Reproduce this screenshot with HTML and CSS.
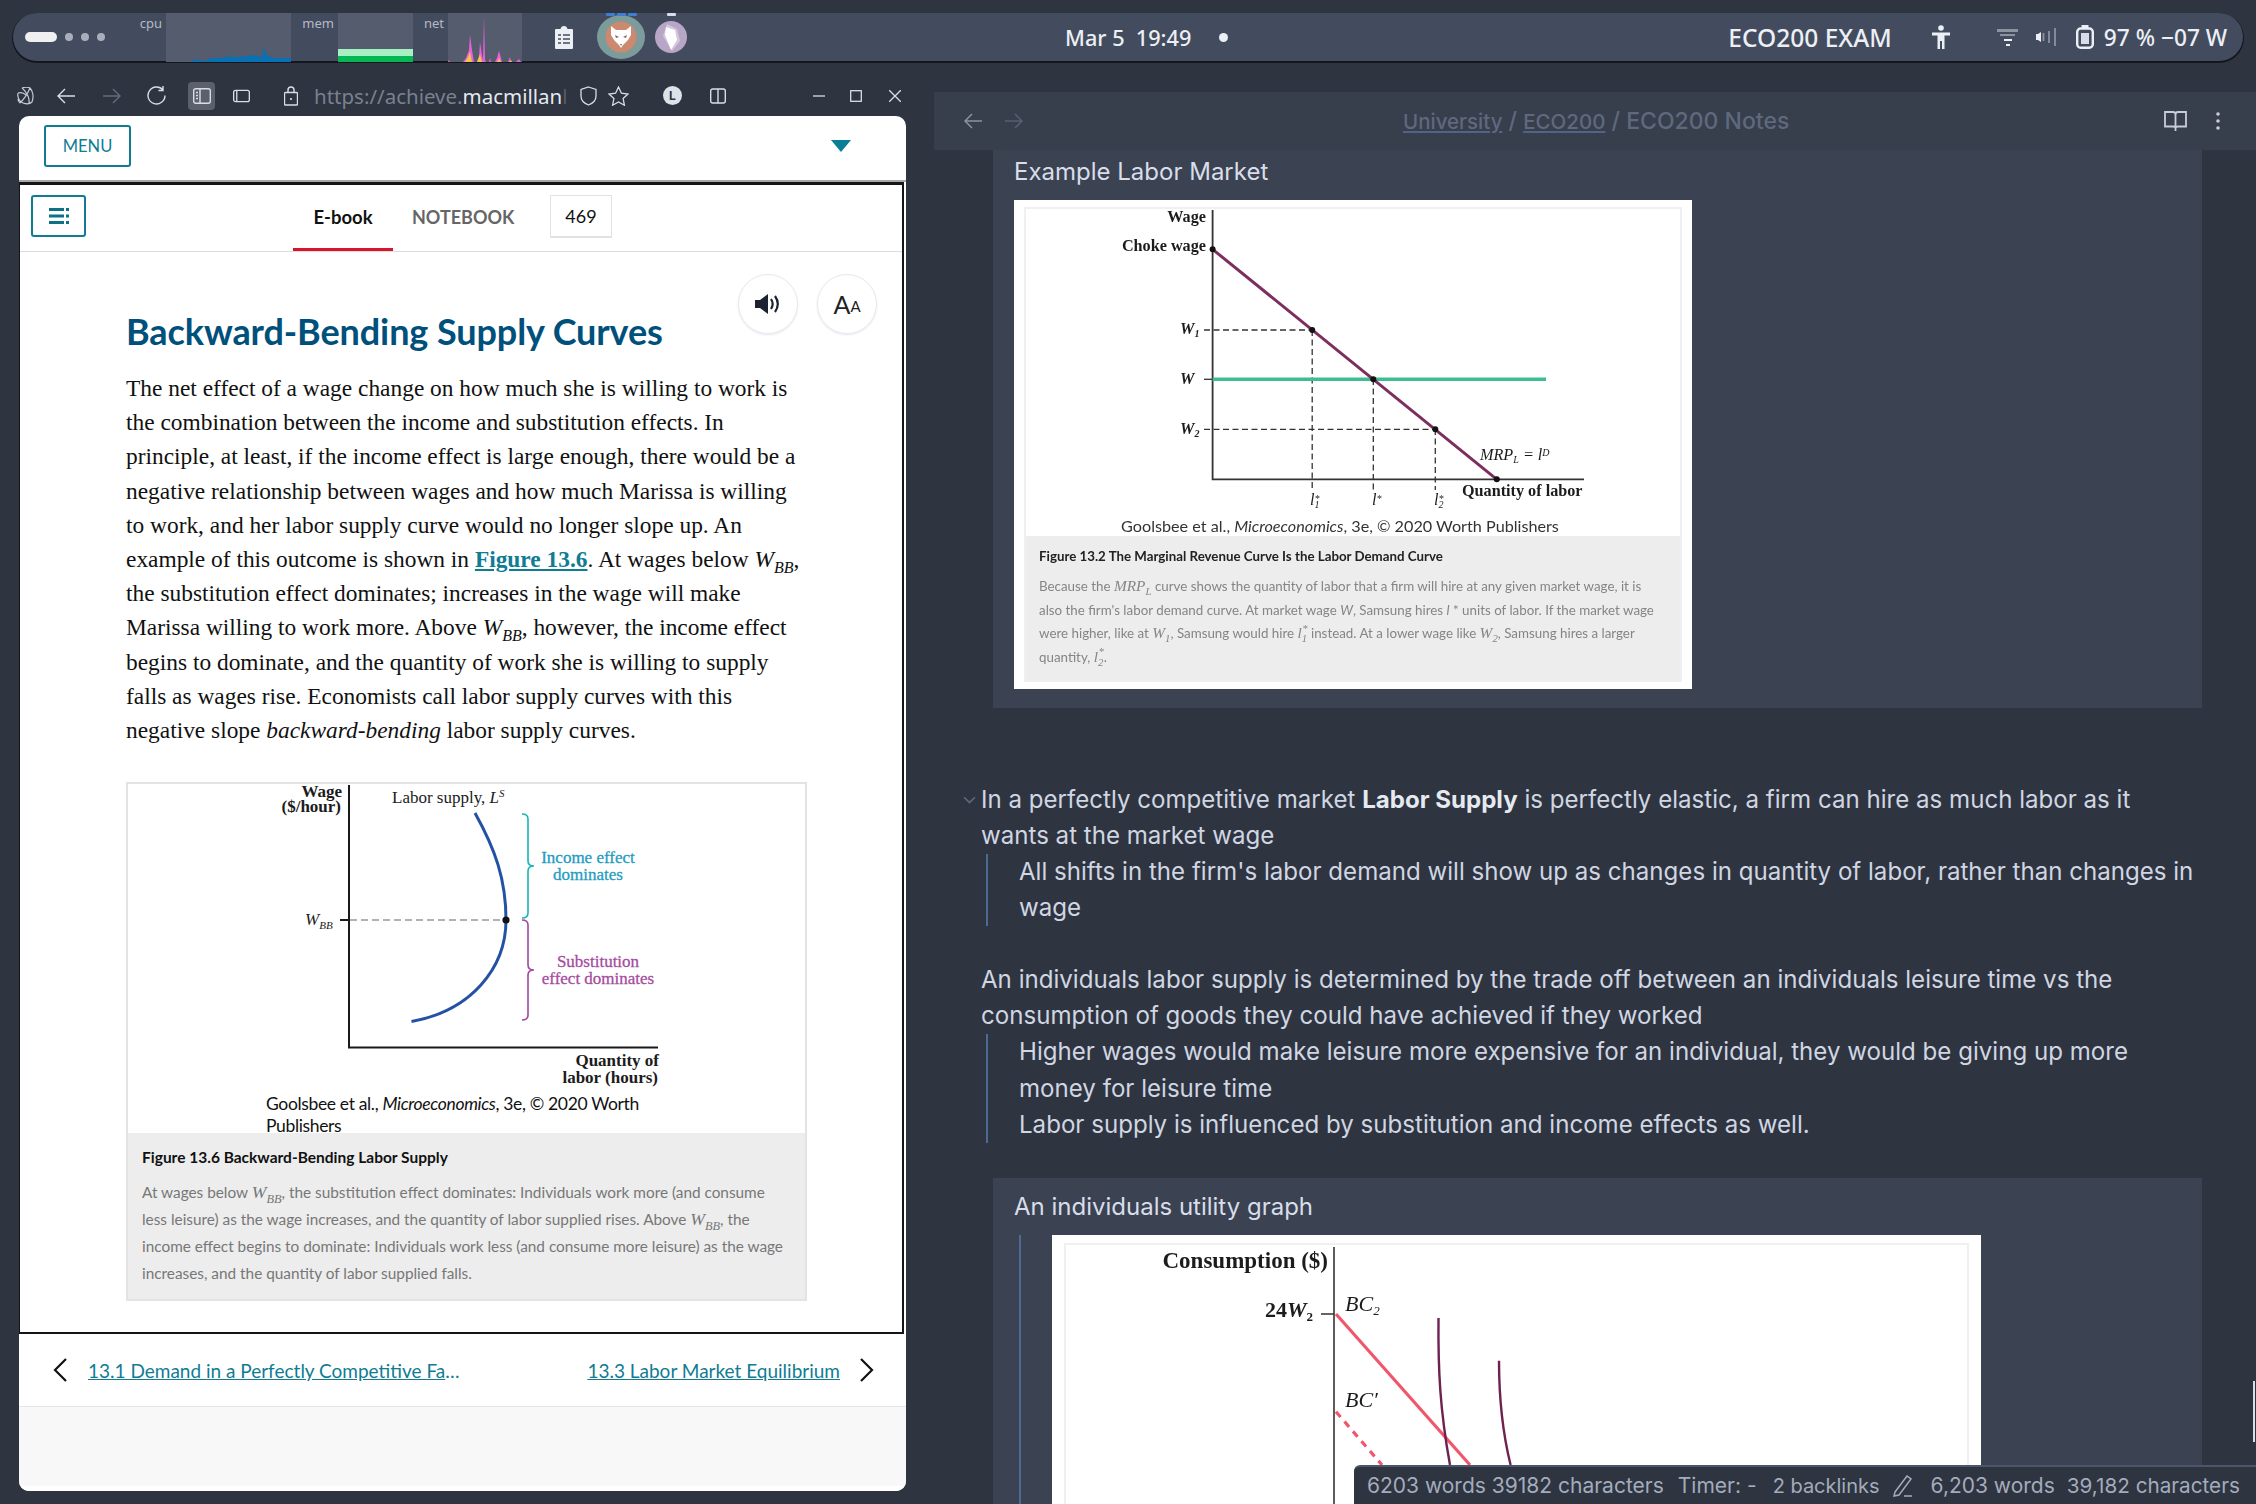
FILE: index.html
```html
<!DOCTYPE html>
<html lang="en">
<head>
	<meta charset="UTF-8">
	<title>ECO200 Notes</title>
	<link rel="stylesheet" href="styles.css">
</head>
<body>
<div class="desktop">

	<!-- top panel -->
	<div class="panel">
		<span class="pill"></span>
		<span class="dot"></span><span class="dot"></span><span class="dot"></span>
		<span class="graph-label label-cpu">cpu</span>
		<svg class="graph graph-cpu" viewBox="166 13 125 49" preserveAspectRatio="none">
			<polygon fill="#0a70b4" points="166,62 190,62 194,60 199,59 201,61 209,60 210,58 222,58 226,57 232,56 236,58 240,56 246,57 250,55 258,56 262,57 264,47 266,54 270,57 276,58 291,58 291,62"/>
		</svg>
		<span class="graph-label label-mem">mem</span>
		<div class="graph graph-mem"><span class="mem-cache"></span><span class="mem-used"></span></div>
		<span class="graph-label label-net">net</span>
		<svg class="graph graph-net" viewBox="448 13 74 49" preserveAspectRatio="none">
			<polygon fill="#e961d8" points="448,62 449,60 450,62 463,62 466,58 469,50 470,35 472,50 474,62 477,62 479,58 480,42 482,55 483,60 484,16 485,60 486,62 489,62 490,58 491,62 495,62 497,58 499,51 501,58 502,62 508,62 510,57 511,62 516,62 518,60 519,59 521,62"/>
			<polygon fill="#f3c64a" points="465,62 468,57 470,52 472,62 477,62 480,54 482,62 497,62 499,58 501,62 509,62 511,60 512,62"/>
		</svg>
		<svg class="panel-clip" viewBox="0 0 18 24">
			<path fill="#eceff4" d="M1 4h4.500c.5-2 1.500-3 3.500-3s3 1 3.500 3H17a1 1 0 0 1 1 1v18a1 1 0 0 1-1 1H1a1 1 0 0 1-1-1V5a1 1 0 0 1 1-1z"/>
			<path stroke="#434c5e" stroke-width="1.600" d="M3 10h3M8 10h7M3 14h3M8 14h7M3 18h3M8 18h7"/>
		</svg>
		<div class="app app-fox">
			<span class="app-marks"><i></i><i></i><i></i></span>
			<svg viewBox="0 0 48 44" width="48" height="44">
				<ellipse cx="24" cy="22" rx="24" ry="22" fill="#7b9c9b"/>
				<circle cx="24" cy="22" r="15.500" fill="#cd8870"/>
				<polygon fill="#fff" points="14,11 19,15 29,15 34,11 34,20 31,25 26,30 24,33 22,30 17,25 14,20"/>
				<path fill="#7a6a64" d="M18 20l4 2-3 1zM30 20l-4 2 3 1zM23 29h2l-1 2z"/>
			</svg>
		</div>
		<div class="app app-gem">
			<span class="app-marks"><i></i></span>
			<svg viewBox="0 0 32 32" width="32" height="32">
				<circle cx="16" cy="16" r="16" fill="#b8a6c6"/>
				<polygon fill="#d2c7dc" points="12,3 22,8 25,20 17,30 8,15"/>
				<polygon fill="#fff" points="11,6 20,9 22,19 16,29 10,14"/>
			</svg>
		</div>
		<span class="clock">Mar 5&nbsp; 19:49</span>
		<span class="clock-dot"></span>
		<span class="task">ECO200 EXAM</span>
		<svg class="icon-person" viewBox="0 0 18 24">
			<circle cx="9" cy="3" r="2.800" fill="#eceff4"/>
			<path fill="#eceff4" d="M0 7.500h18v3h-5.500V24H10v-8H8v8H5.500V10.500H0z"/>
		</svg>
		<svg class="icon-signal" viewBox="0 0 22 17">
			<path fill="#8b92a0" d="M0 0h21v3H0zM3 5h15v2H3z"/><path fill="#eceff4" d="M7 10h8v2H7zM9 15h4v2H9z"/>
		</svg>
		<svg class="icon-volume" viewBox="0 0 20 18">
			<path fill="#eceff4" d="M0 6h2l3-2v10l-3-2H0z"/><path stroke="#8b92a0" stroke-width="1.800" fill="none" d="M7.500 5v8M13 3v12M19 0v18"/>
		</svg>
		<svg class="icon-battery" viewBox="0 0 18 24">
			<rect x="5.500" y="0" width="7" height="4" fill="#eceff4"/>
			<rect x="1.200" y="3.500" width="15.600" height="19.300" rx="3.500" fill="none" stroke="#eceff4" stroke-width="2.400"/>
			<rect x="5" y="8" width="8" height="11" fill="#d8dee9"/>
		</svg>
		<span class="battery-text">97 % −07 W</span>
	</div>

	<div class="workspace">

		<!-- browser window -->
		<div class="browser">
			<div class="toolbar">
				<svg class="tb tb-leaf" viewBox="0 0 18 18"><path fill="none" stroke="#c8ccd4" stroke-width="1.200" d="M1 6c3-1 6 0 8 2M5 1c4 3 8 10 7 15M13 1C11 6 7 12 3 16M1 6c-1 5 2 9 5 10s7 1 9-1M13 1c3 3 4 9 2 14M5 1c3-1 6-1 8 0M3 16c-1-1-2-2-2-4"/></svg>
				<svg class="tb tb-back" viewBox="0 0 18 18"><path fill="none" stroke="#d8dee9" stroke-width="1.400" d="M18 9H1M8 2L1 9l7 7"/></svg>
				<svg class="tb tb-forward" viewBox="0 0 18 18"><path fill="none" stroke="#646c7c" stroke-width="1.400" d="M0 9h17M10 2l7 7-7 7"/></svg>
				<svg class="tb tb-reload" viewBox="0 0 19 20"><path fill="none" stroke="#d8dee9" stroke-width="1.400" d="M16 4a8.500 8.500 0 1 0 2 5.500M16 0v4.500h-4.500"/></svg>
				<span class="tb-active"><svg viewBox="0 0 18 18" width="18" height="18"><rect x=".7" y="1.700" width="16.600" height="14.600" rx="2" fill="none" stroke="#d8dee9" stroke-width="1.400"/><path stroke="#d8dee9" stroke-width="1.400" d="M7 2v14M3 5.500h2M3 8.500h2M3 11.500h2"/></svg></span>
				<svg class="tb tb-panel" viewBox="0 0 18 16"><rect x=".7" y="2" width="16.600" height="12" rx="2" fill="none" stroke="#d8dee9" stroke-width="1.400"/><path stroke="#d8dee9" stroke-width="1.400" d="M4 2v12"/></svg>
				<svg class="tb tb-lock" viewBox="0 0 14 20"><path fill="none" stroke="#d8dee9" stroke-width="1.400" d="M4 6.500V4a3 3 0 0 1 6 0v2.500M1.500 6.500h11a1 1 0 0 1 1 1V18a1 1 0 0 1-1 1h-11a1 1 0 0 1-1-1V7.500a1 1 0 0 1 1-1z"/><circle cx="7" cy="13" r="1.100" fill="#d8dee9"/></svg>
				<div class="url"><span class="url-dim">https://achieve.</span>macmillan<span class="url-fade">l</span></div>
				<svg class="tb tb-shield" viewBox="0 0 17 20"><path fill="none" stroke="#d8dee9" stroke-width="1.300" d="M8.500 1l7.500 2.500V10c0 4.500-3.500 7.500-7.500 9-4-1.500-7.500-4.500-7.500-9V3.500z"/></svg>
				<svg class="tb tb-star" viewBox="0 0 21 20"><path fill="none" stroke="#d8dee9" stroke-width="1.300" d="M10.500 1l2.900 6.200 6.600.8-4.900 4.600 1.300 6.600-5.900-3.300-5.900 3.300 1.300-6.600L1 8l6.600-.8z"/></svg>
				<span class="tb-user">L</span>
				<svg class="tb tb-split" viewBox="0 0 16 16"><rect x=".7" y="1" width="14.600" height="14" rx="2" fill="none" stroke="#d8dee9" stroke-width="1.400"/><path stroke="#d8dee9" stroke-width="1.400" d="M8 1v14"/></svg>
				<svg class="tb tb-min" viewBox="0 0 12 12"><path stroke="#d8dee9" stroke-width="1.300" d="M0 6h12"/></svg>
				<svg class="tb tb-max" viewBox="0 0 12 12"><rect x=".7" y=".7" width="10.600" height="10.600" fill="none" stroke="#d8dee9" stroke-width="1.300"/></svg>
				<svg class="tb tb-close" viewBox="0 0 12 12"><path stroke="#d8dee9" stroke-width="1.300" d="M0 0l12 12M12 0L0 12"/></svg>
			</div>

			<div class="card">
				<div class="menu-bar">
					<span class="menu-btn">MENU</span>
					<span class="menu-caret"></span>
				</div>
				<div class="frame">
					<div class="tabs">
						<span class="toc-btn">
							<svg viewBox="0 0 20 16" width="20" height="16"><path fill="#0d7186" d="M0 0h15v3H0zM17 0h3v3h-3zM0 6.500h15v3H0zM17 6.500h3v3h-3zM0 13h15v3H0zM17 13h3v3h-3z"/></svg>
						</span>
						<span class="tab tab-active">E-book</span>
						<span class="tab tab-notebook">NOTEBOOK</span>
						<span class="page-box">469</span>
					</div>
					<div class="article">
						<div class="article-head">
							<h1>Backward-Bending Supply Curves</h1>
							<div class="tools">
								<span class="tool">
									<svg viewBox="0 0 26 22" width="26" height="22"><path fill="#1d2230" d="M0 7h5l8-6v20l-8-6H0z"/><path fill="none" stroke="#1d2230" stroke-width="2.200" d="M16 6c2 3 2 7 0 10M20 3c3.500 5 3.500 11 0 16"/></svg>
								</span>
								<span class="tool tool-text">A<small>A</small></span>
							</div>
						</div>
						<p class="body-text">The net effect of a wage change on how much she is willing to work is<br>
						the combination between the income and substitution effects. In<br>
						principle, at least, if the income effect is large enough, there would be a<br>
						negative relationship between wages and how much Marissa is willing<br>
						to work, and her labor supply curve would no longer slope up. An<br>
						example of this outcome is shown in <a href="#">Figure 13.6</a>. At wages below <i>W<sub>BB</sub></i>,<br>
						the substitution effect dominates; increases in the wage will make<br>
						Marissa willing to work more. Above <i>W<sub>BB</sub></i>, however, the income effect<br>
						begins to dominate, and the quantity of work she is willing to supply<br>
						falls as wages rise. Economists call labor supply curves with this<br>
						negative slope <i>backward-bending</i> labor supply curves.</p>

						<div class="figure">
							<svg class="figure-art" viewBox="266 785 400 309" width="400" height="309">
								<path stroke="#1a1a1a" stroke-width="2" fill="none" d="M349 786V1048.500H658M340 921h9"/>
								<path stroke="#999" stroke-width="1.300" stroke-dasharray="7 4" d="M350 921h156"/>
								<path stroke="#2352a5" stroke-width="3" fill="none" d="M475 814C495 850 506 880 506 921C506 970 470 1012 411.500 1022.500"/>
								<circle cx="506" cy="921" r="3.600" fill="#111"/>
								<path stroke="#18b5b5" stroke-width="1.600" fill="none" d="M522 815c4 0 6 1 6 5v42c0 3 2 5 6 5c-4 0-6 2-6 5v42c0 4-2 5-6 5"/>
								<path stroke="#a0479c" stroke-width="1.600" fill="none" d="M522 921c4 0 6 1 6 5v40c0 3 2 5 6 5c-4 0-6 2-6 5v40c0 4-2 5-6 5"/>
								<g class="art-text art-bold">
									<text x="342" y="798" text-anchor="end">Wage</text>
									<text x="341" y="813" text-anchor="end">($/hour)</text>
									<text x="659" y="1067" text-anchor="end">Quantity of</text>
									<text x="658" y="1084" text-anchor="end">labor (hours)</text>
								</g>
								<g class="art-text">
									<text x="392" y="804">Labor supply, <tspan font-style="italic">L</tspan><tspan font-style="italic" font-size="11" dy="-6">S</tspan></text>
									<text x="305" y="926" font-style="italic">W<tspan font-size="11" dy="4">BB</tspan></text>
								</g>
								<g class="art-text art-teal">
									<text x="588" y="864" text-anchor="middle">Income effect</text>
									<text x="588" y="881" text-anchor="middle">dominates</text>
								</g>
								<g class="art-text art-purple">
									<text x="598" y="968" text-anchor="middle">Substitution</text>
									<text x="598" y="985" text-anchor="middle">effect dominates</text>
								</g>
							</svg>
							<p class="figure-credit">Goolsbee et al., <i>Microeconomics</i>, 3e, © 2020 Worth<br>Publishers</p>
							<div class="caption">
								<h4>Figure 13.6 Backward-Bending Labor Supply</h4>
								<p>At wages below <i class="math">W<sub>BB</sub></i>, the substitution effect dominates: Individuals work more (and consume<br>
								less leisure) as the wage increases, and the quantity of labor supplied rises. Above <i class="math">W<sub>BB</sub></i>, the<br>
								income effect begins to dominate: Individuals work less (and consume more leisure) as the wage<br>
								increases, and the quantity of labor supplied falls.</p>
							</div>
						</div>
					</div>
				</div>
				<div class="page-nav">
					<svg class="chev" viewBox="0 0 14 24"><path fill="none" stroke="#111" stroke-width="2.200" d="M13 1L2 12l11 11"/></svg>
					<a class="nav-link nav-prev" href="#">13.1 Demand in a Perfectly Competitive Factor Market</a>
					<a class="nav-link nav-next" href="#">13.3 Labor Market Equilibrium</a>
					<svg class="chev" viewBox="0 0 14 24"><path fill="none" stroke="#111" stroke-width="2.200" d="M1 1l11 11L1 23"/></svg>
				</div>
				<div class="card-bottom"></div>
			</div>
		</div>

		<!-- notes window -->
		<div class="notes">
			<div class="notes-head">
				<svg class="nh-back" viewBox="0 0 18 16"><path fill="none" stroke="#8a93a6" stroke-width="1.500" d="M18 8H1M8 1L1 8l7 7"/></svg>
				<svg class="nh-forward" viewBox="0 0 18 16"><path fill="none" stroke="#576074" stroke-width="1.500" d="M0 8h17M10 1l7 7-7 7"/></svg>
				<div class="crumbs"><a href="#">University</a> / <a href="#">ECO200</a> / ECO200 Notes</div>
				<svg class="nh-book" viewBox="0 0 23 20"><path fill="none" stroke="#c8ced9" stroke-width="1.800" d="M1 1h8c1.500 0 2.500 1 2.500 2.500V17c0-1-1-1.500-2.500-1.500H1zM22 1h-8c-1.500 0-2.500 1-2.500 2.500V17c0-1 1-1.500 2.500-1.500h8zM11.500 17v3"/></svg>
				<svg class="nh-more" viewBox="0 0 4 18"><circle cx="2" cy="2" r="1.800" fill="#c8ced9"/><circle cx="2" cy="9" r="1.800" fill="#c8ced9"/><circle cx="2" cy="16" r="1.800" fill="#c8ced9"/></svg>
			</div>

			<div class="callout callout-first">
				<div class="callout-title">Example Labor Market</div>
				<div class="shot shot-market">
					<div class="shot-inner">
						<svg viewBox="1026 209 652 310" width="652" height="310">
							<path stroke="#333" stroke-width="1.800" fill="none" d="M1212.600 210V479.300H1584"/>
							<path stroke="#333" stroke-width="1.300" stroke-dasharray="6 3.500" fill="none" d="M1204 330H1312M1204 429.300H1435M1312.200 330V490M1373.300 379V490M1435.300 429V490"/>
							<path stroke="#333" stroke-width="1.300" d="M1204 379.300h9"/>
							<path stroke="#3dbd90" stroke-width="3.500" d="M1212.600 379.300H1546"/>
							<path stroke="#7c2f5e" stroke-width="3" d="M1212.600 249.300L1496.800 479.300"/>
							<g fill="#111">
								<circle cx="1212.600" cy="249.300" r="3"/><circle cx="1312.200" cy="330" r="3"/><circle cx="1373.300" cy="379.300" r="3"/><circle cx="1435.300" cy="429.300" r="3"/><circle cx="1496.800" cy="479.300" r="3"/>
							</g>
							<g class="art-text art-bold art-small">
								<text x="1206" y="222" text-anchor="end">Wage</text>
								<text x="1206" y="251" text-anchor="end">Choke wage</text>
								<text x="1462" y="496">Quantity of labor</text>
							</g>
							<g class="art-text art-small" font-style="italic" font-weight="bold">
								<text x="1180" y="334">W<tspan font-size="10" dy="3">1</tspan></text>
								<text x="1180" y="384">W</text>
								<text x="1180" y="434">W<tspan font-size="10" dy="3">2</tspan></text>
								<text x="1480" y="460" font-weight="normal">MRP<tspan font-size="10" dy="3">L</tspan><tspan dy="-3"> = l</tspan><tspan font-size="10" dy="-4">D</tspan></text>
								<text x="1310" y="505" font-weight="normal">l<tspan font-size="10" dy="3">1</tspan><tspan font-size="10" dy="-6" dx="-5">*</tspan></text>
								<text x="1372" y="505" font-weight="normal">l<tspan font-size="10" dy="-3">*</tspan></text>
								<text x="1434" y="505" font-weight="normal">l<tspan font-size="10" dy="3">2</tspan><tspan font-size="10" dy="-6" dx="-5">*</tspan></text>
							</g>
						</svg>
						<p class="shot-credit">Goolsbee et al., <i>Microeconomics</i>, 3e, © 2020 Worth Publishers</p>
						<div class="shot-caption">
							<h4>Figure 13.2 The Marginal Revenue Curve Is the Labor Demand Curve</h4>
							<p>Because the <i class="math">MRP<sub>L</sub></i> curve shows the quantity of labor that a firm will hire at any given market wage, it is<br>
							also the firm's labor demand curve. At market wage <i>W</i>, Samsung hires <i>l</i> * units of labor. If the market wage<br>
							were higher, like at <i class="math">W<sub>1</sub></i>, Samsung would hire <i class="math">l<sub>1</sub><sup>*</sup></i> instead. At a lower wage like <i class="math">W<sub>2</sub></i>, Samsung hires a larger<br>
							quantity, <i class="math">l<sub>2</sub><sup>*</sup></i>.</p>
						</div>
					</div>
				</div>
			</div>

			<div class="note-block note-block-first">
				<svg class="fold" viewBox="0 0 12 8"><path fill="none" stroke="#5f6a80" stroke-width="1.500" d="M1 1l5 5 5-5"/></svg>
				<p>In a perfectly competitive market <b>Labor Supply</b> is perfectly elastic, a firm can hire as much labor as it wants at the market wage</p>
				<div class="note-quote">All shifts in the firm's labor demand will show up as changes in quantity of labor, rather than changes in wage</div>
			</div>
			<div class="note-block note-block-next">
				<p>An individuals labor supply is determined by the trade off between an individuals leisure time vs the consumption of goods they could have achieved if they worked</p>
				<div class="note-quote">Higher wages would make leisure more expensive for an individual, they would be giving up more money for leisure time<br>Labor supply is influenced by substitution and income effects as well.</div>
			</div>

			<div class="callout callout-second">
				<div class="callout-title">An individuals utility graph</div>
				<div class="quote-rail">
					<div class="shot shot-utility">
						<div class="shot-inner shot-inner-open">
							<svg viewBox="1065 1245 904 260" width="904" height="260">
								<path stroke="#333" stroke-width="1.600" d="M1333 1247V1505M1320 1314h13"/>
								<path stroke="#f0566c" stroke-width="3.200" d="M1335 1314L1469 1465"/>
								<path stroke="#f0566c" stroke-width="3.200" stroke-dasharray="7 6" d="M1335 1411.700L1381 1465"/>
								<path stroke="#6d2250" stroke-width="2.400" fill="none" d="M1437.500 1318C1437 1370 1439 1410 1449 1465"/>
								<path stroke="#6d2250" stroke-width="2.400" fill="none" d="M1498 1360.700C1498 1400 1501 1430 1509.600 1465"/>
								<g class="art-text art-bold art-utility">
									<text class="art-consumption" x="1327" y="1268" text-anchor="end">Consumption ($)</text>
									<text x="1264" y="1317">24<tspan font-style="italic">W</tspan><tspan font-size="13" dy="4">2</tspan></text>
								</g>
								<g class="art-text art-utility" font-style="italic">
									<text x="1344" y="1311">BC<tspan font-size="13" dy="4">2</tspan></text>
									<text x="1344" y="1407">BC′</text>
								</g>
							</svg>
						</div>
					</div>
				</div>
			</div>
		</div>
	</div>

	<div class="scroll-mark"></div>
	<div class="status">
		<span class="st-count">6203 words 39182 characters</span>
		<span class="st-timer">Timer: -</span>
		<span class="st-links">2 backlinks</span>
		<svg class="st-pencil" viewBox="0 0 20 22"><path fill="none" stroke="#a3acbd" stroke-width="1.500" d="M2 17L14 1l4 3L6 20l-5 1zM11 21h8"/></svg>
		<span class="st-words">6,203 words</span>
		<span class="st-chars">39,182 characters</span>
	</div>
</div>
</body>
</html>
```

FILE: styles.css
```css
*{box-sizing: border-box;}
body,p,h1,h4{margin:0;padding:0}
svg{display: block;flex: none;}

body{
	background-color: #2e3440;
}
.desktop{
	width: 2256px;
	height: 1504px;
	position: relative;
	overflow: hidden;
	background-color: #2e3440;
	color: #d8dee9;
	font-family: "Inter", "Noto Sans", sans-serif;
}

/* top panel */
.panel{
	height: 48px;
	margin: 13px 13px 14px 13px;
	display: flex;
	align-items: center;
	background-color: #434c5e;
	border-radius: 24px;
	box-shadow: 0 1px 0 1px #14171d;
	color: #eceff4;
	font-family: "Noto Sans", sans-serif;
}
.pill{
	width: 32px;
	height: 10px;
	margin-left: 12px;
	border-radius: 5px;
	background-color: #f0f0f0;
}
.dot{
	width: 8px;
	height: 8px;
	margin-left: 8px;
	border-radius: 50%;
	background-color: #a9afba;
}
.graph-label{
	align-self: flex-start;
	margin-top: 1px;
	font-size: 13px;
	line-height: 18px;
	text-align: right;
	color: #b4bac6;
}
.label-cpu{width: 52px;margin-left: 5px;}
.label-mem{width: 43px;}
.label-net{width: 31px;}
.graph{
	align-self: stretch;
	height: 49px;
	margin-left: 4px;
	background-color: #555c6e;
}
.graph-cpu{width: 125px;}
.graph-mem{
	width: 75px;
	display: flex;
	flex-direction: column;
	justify-content: flex-end;
}
.mem-cache{height: 7px;background-color: #a8efc4;}
.mem-used{height: 6px;background-color: #06b654;}
.graph-net{width: 74px;}
.panel-clip{
	width: 18px;
	height: 24px;
	margin-left: 33px;
}
.app{
	position: relative;
	height: 48px;
	display: flex;
	align-items: center;
}
.app-fox{margin-left: 24px;}
.app-gem{margin-left: 10px;}
.app-marks{
	position: absolute;
	top: 0;
	left: 0;
	right: 0;
	display: flex;
	justify-content: center;
	gap: 2px;
}
.app-marks i{
	width: 9px;
	height: 3px;
	border-radius: 1px;
	background-color: #3b7fd6;
}
.app-gem .app-marks i{background-color: #d8dee9;}
.clock{
	margin-left: 378px;
	font-size: 21.700px;
	font-weight: 500;
	white-space: nowrap;
}
.clock-dot{
	width: 9px;
	height: 9px;
	margin-left: 28px;
	border-radius: 50%;
	background-color: #eceff4;
}
.task{
	margin-left: 500px;
	font-size: 24.500px;
	font-weight: 500;
	white-space: nowrap;
}
.icon-person{width: 18px;height: 24px;margin-left: 40px;}
.icon-signal{width: 22px;height: 17px;margin-left: 47px;}
.icon-volume{width: 20px;height: 18px;margin-left: 17px;}
.icon-battery{width: 18px;height: 24px;margin-left: 20px;}
.battery-text{
	margin-left: 10px;
	font-size: 22.700px;
	font-weight: 500;
	white-space: nowrap;
}

.workspace{
	height: 1429px;
	display: grid;
	grid-template-columns: 934px 1322px;
}

/* browser */
.browser{
	min-width: 0;
}
.toolbar{
	height: 41px;
	display: flex;
	align-items: center;
	padding-left: 17px;
}
.tb{width: 18px;height: 18px;}
.tb-back{margin-left: 22px;}
.tb-forward{margin-left: 28px;}
.tb-reload{margin-left: 26px;width: 19px;height: 20px;}
.tb-active{
	width: 27px;
	height: 28px;
	margin-left: 22px;
	display: flex;
	align-items: center;
	justify-content: center;
	border-radius: 4px;
	background-color: #5b606c;
}
.tb-panel{margin-left: 18px;width: 17px;}
.tb-lock{margin-left: 34px;width: 14px;height: 20px;}
.url{
	width: 258px;
	margin-left: 16px;
	white-space: nowrap;
	font-family: "Noto Sans", sans-serif;
	font-size: 20.500px;
	color: #e5e9f0;
}
.url-dim{color: #7a818f;}
.url-fade{color: #555c6a;}
.tb-shield{margin-left: 8px;width: 17px;height: 20px;}
.tb-star{margin-left: 11px;width: 21px;height: 20px;}
.tb-user{
	width: 19px;
	height: 19px;
	margin-left: 34px;
	border-radius: 50%;
	background-color: #dde1ea;
	color: #2e3440;
	font-size: 12px;
	font-weight: 700;
	line-height: 19px;
	text-align: center;
}
.tb-split{margin-left: 28px;width: 16px;height: 16px;}
.tb-min{margin-left: 87px;width: 12px;height: 12px;}
.tb-max{margin-left: 25px;width: 12px;height: 12px;}
.tb-close{margin-left: 27px;width: 12px;height: 12px;}

.card{
	width: 887px;
	height: 1375px;
	margin-left: 19px;
	display: flex;
	flex-direction: column;
	overflow: hidden;
	border-radius: 10px;
	background-color: #fff;
	color: #111;
	font-family: "Lato", "Noto Sans", sans-serif;
}
.menu-bar{
	height: 66px;
	flex: none;
	display: flex;
	align-items: center;
	justify-content: space-between;
	padding: 0 55px 4px 25px;
	border-bottom: 2px solid #a8a8a8;
}
.menu-btn{
	width: 87px;
	height: 42px;
	border: 2px solid #0f7c93;
	border-radius: 3px;
	color: #0f7c93;
	font-size: 16.500px;
	line-height: 38px;
	text-align: center;
}
.menu-caret{
	width: 0;
	height: 0;
	border-left: 10px solid transparent;
	border-right: 10px solid transparent;
	border-top: 12px solid #0a7d98;
}
.frame{
	height: 1152px;
	flex: none;
	margin-right: 2px;
	border: 2px solid #151515;
	border-top-width: 3px;
	border-left-width: 1px;
}
.tabs{
	height: 67px;
	display: flex;
	align-items: stretch;
	padding-left: 11px;
	border-bottom: 1px solid #dcdcdc;
}
.toc-btn{
	width: 55px;
	height: 42px;
	margin-top: 10px;
	display: flex;
	align-items: center;
	justify-content: center;
	border: 2px solid #0f7c93;
	border-radius: 3px;
}
.tab{
	width: 100px;
	margin-left: 19px;
	color: #666;
	font-size: 18.500px;
	font-weight: 700;
	line-height: 64px;
	text-align: center;
}
.tab-notebook{font-size: 18px;}
.tab-active{
	margin-left: 207px;
	color: #111;
	border-bottom: 3px solid #d7142c;
}
.page-box{
	width: 62px;
	height: 43px;
	margin-top: 10px;
	margin-left: 38px;
	border: 1px solid #e2e2e2;
	border-bottom-width: 2px;
	font-size: 18px;
	line-height: 40px;
	text-align: center;
}
.article{
	padding-left: 106px;
}
.article-head{
	display: flex;
	justify-content: space-between;
	padding-right: 25px;
}
h1{
	margin-top: 54px;
	color: #00507c;
	font-size: 36px;
	font-weight: 700;
	letter-spacing: -.1px;
	line-height: 50px;
	white-space: nowrap;
}
.tools{
	display: flex;
	gap: 19px;
	margin-top: 22px;
}
.tool{
	width: 60px;
	height: 60px;
	display: flex;
	align-items: center;
	justify-content: center;
	border: 1px solid #e6e8ee;
	border-radius: 50%;
	box-shadow: 0 1px 2px #e3e6ec;
}
.tool-text{
	font-size: 25px;
	color: #222;
}
.tool-text small{font-size: 15px;margin-top: 4px;}
.body-text{
	margin-top: 15px;
	font-family: "Liberation Serif", serif;
	font-size: 23.400px;
	line-height: 34.200px;
	white-space: nowrap;
}
.body-text sub{font-size: 16px;line-height: 0;}
.body-text a{
	color: #0f7c93;
	font-weight: 700;
}
.figure{
	width: 681px;
	margin-top: 35px;
	border: 2px solid #e3e3e3;
}
.figure-art{
	margin-left: 138px;
}
.figure-credit{
	height: 40px;
	padding-left: 138px;
	font-size: 17.500px;
	letter-spacing: -.35px;
	line-height: 21.500px;
	white-space: nowrap;
}
.caption{
	height: 166px;
	padding: 12px 13px 0 14px;
	background-color: #ededed;
}
.caption h4{
	font-size: 15.500px;
	font-weight: 700;
	line-height: 24px;
}
.caption p{
	margin-top: 10px;
	color: #777;
	font-size: 15.350px;
	line-height: 27px;
	white-space: nowrap;
}
.math{
	font-family: "Liberation Serif", serif;
	font-size: 1.150em;
	line-height: 0;
}
.math sub{font-size: .7em;line-height: 0;}
.math sup{font-size: .7em;line-height: 0;margin-left: -5px;}

.art-text{
	font-family: "Liberation Serif", serif;
	font-size: 17px;
	fill: #1c1c1c;
}
.art-bold{font-weight: 700;}
.art-teal{fill: #1f9cc2;stroke: #1f9cc2;stroke-width: .3px;}
.art-purple{fill: #a54c9f;stroke: #a54c9f;stroke-width: .3px;}
.art-small{font-size: 16.200px;}
.art-utility{font-size: 22px;}
.art-consumption{font-size: 23px;}

.page-nav{
	height: 73px;
	flex: none;
	display: flex;
	align-items: center;
	padding: 0 32px 0 34px;
	background-color: #fff;
	border-bottom: 1px solid #e6e6e6;
}
.chev{width: 14px;height: 24px;}
.nav-link{
	color: #0f7c93;
	font-size: 19px;
	white-space: nowrap;
}
.nav-prev{
	width: 376px;
	margin-left: 21px;
	overflow: hidden;
	text-overflow: ellipsis;
}
.nav-next{
	margin-left: auto;
	margin-right: 20px;
}
.card-bottom{
	flex: 1;
	background-color: #f8f8f8;
	border-bottom: 5px solid #fff;
}

/* notes */
.notes{
	min-width: 0;
	padding-top: 17px;
}
.notes-head{
	height: 58px;
	display: flex;
	align-items: center;
	background-color: #373e4c;
}
.nh-back{width: 18px;height: 16px;margin-left: 30px;}
.nh-forward{width: 18px;height: 16px;margin-left: 23px;}
.crumbs{
	width: 394px;
	margin-left: 380px;
	color: #5f697e;
	font-size: 23px;
	font-weight: 500;
	white-space: nowrap;
}
.crumbs a{
	color: #5f697e;
	font-size: 20.500px;
	text-decoration-color: #4f6488;
}
.nh-book{width: 23px;height: 20px;margin-left: 367px;}
.nh-more{width: 4px;height: 18px;margin-left: 29px;}

.callout{
	width: 1209px;
	margin-left: 59px;
	background-color: #3b4252;
}
.callout-first{
	height: 558px;
	padding: 4px 0 0 21px;
}
.callout-title{
	color: #d8dee9;
	font-size: 24px;
	line-height: 36px;
}
.shot{
	background-color: #fff;
	padding: 7px 10px;
}
.shot-market{
	width: 678px;
	height: 489px;
	margin-top: 10px;
}
.shot-inner{
	height: 100%;
	border: 2px solid #f0f0f0;
	filter: blur(.6px);
	overflow: hidden;
}
.shot-credit{
	height: 18px;
	margin-top: -2px;
	color: #333;
	font-family: "Lato", sans-serif;
	font-size: 16.200px;
	line-height: 18px;
	text-align: center;
	transform: translateX(-13px);
}
.shot-caption{
	height: 148px;
	margin-top: 1px;
	padding: 8px 0 0 13px;
	background-color: #ededed;
	font-family: "Lato", sans-serif;
}
.shot-caption h4{
	color: #222;
	font-size: 13.300px;
	line-height: 24px;
}
.shot-caption p{
	margin-top: 7px;
	color: #858585;
	font-size: 13.350px;
	line-height: 23.500px;
	white-space: nowrap;
}

.note-block{
	position: relative;
	width: 1222px;
	margin-left: 47px;
	color: #d0d6e2;
	font-size: 24.100px;
	line-height: 36.200px;
}
.note-block b{font-weight: 700;color: #e5e9f0;}
.note-block-first{margin-top: 73.500px;}
.note-block-next{margin-top: 35.700px;}
.fold{
	position: absolute;
	left: -18px;
	top: 14px;
	width: 13px;
	height: 9px;
}
.note-quote{
	margin-left: 5px;
	padding-left: 31px;
	border-left: 2px solid #4c6a93;
}
.callout-second{
	height: 400px;
	margin-top: 35px;
	padding: 11px 0 0 21px;
}
.quote-rail{
	margin-top: 10px;
	margin-left: 5px;
	padding-left: 31px;
	border-left: 2px solid #4c6a93;
}
.shot-utility{
	width: 929px;
	padding: 8px 12px 0 12px;
}
.shot-inner-open{
	height: auto;
	border-bottom: 0;
}

.scroll-mark{
	position: absolute;
	right: 1px;
	top: 1381px;
	width: 2px;
	height: 61px;
	background-color: #d8dee9;
}
.status{
	position: absolute;
	right: 0;
	bottom: 0;
	width: 902px;
	height: 39px;
	display: flex;
	align-items: center;
	padding-left: 13px;
	background-color: #2e3440;
	border-top: 2px solid #4c566a;
	border-top-left-radius: 6px;
	color: #a3acbd;
	font-size: 21px;
	white-space: nowrap;
}
.st-timer{margin-left: 14px;}
.st-links{margin-left: 16px;font-size: 20px;}
.st-pencil{width: 20px;height: 22px;margin-left: 13px;}
.st-words{margin-left: 18px;}
.st-chars{margin-left: 12px;font-size: 20.700px;}
```
